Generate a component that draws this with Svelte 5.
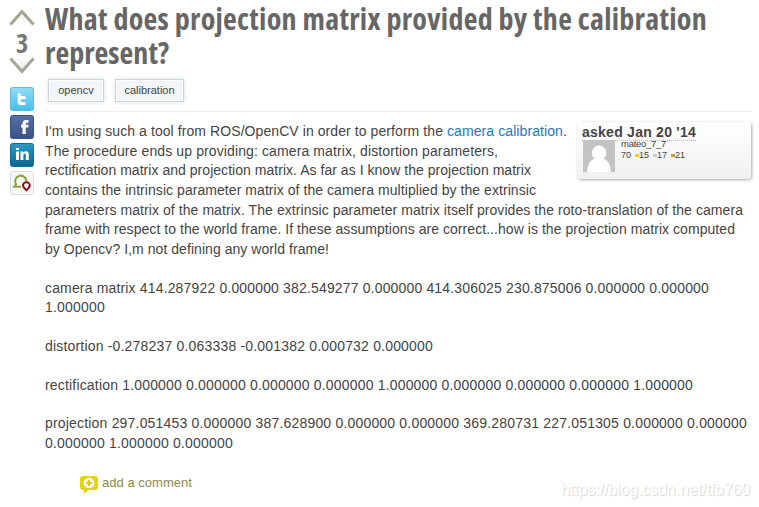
<script>
  const lines = [
    ["I'm using such a tool from ROS/OpenCV in order to perform the ", 402, 'camera calibration'],
    ['The procedure ends up providing: camera matrix, distortion parameters,', 453],
    ['rectification matrix and projection matrix. As far as I know the projection matrix', 486],
    ['contains the intrinsic parameter matrix of the camera multiplied by the extrinsic', 491],
    ['parameters matrix of the matrix. The extrinsic parameter matrix itself provides the roto-translation of the camera', 698],
    ['frame with respect to the world frame. If these assumptions are correct...how is the projection matrix computed', 690],
    ['by Opencv? I,m not defining any world frame!', 284],
    ['']
  ];
  const matrices = [
    ['camera matrix 414.287922 0.000000 382.549277 0.000000 414.306025 230.875006 0.000000 0.000000', 664],
    ['1.000000', 60],
    [''],
    ['distortion -0.278237 0.063338 -0.001382 0.000732 0.000000', 388],
    [''],
    ['rectification 1.000000 0.000000 0.000000 0.000000 1.000000 0.000000 0.000000 0.000000 1.000000', 648],
    [''],
    ['projection 297.051453 0.000000 387.628900 0.000000 0.000000 369.280731 227.051305 0.000000 0.000000', 702],
    ['0.000000 1.000000 0.000000', 188]
  ];

  // Tracks a run of text so that it fills the given width.
  function fit(node, width) {
    if (!width) return;
    const natural = node.getBoundingClientRect().width;
    node.style.letterSpacing = (width - natural) / node.textContent.length + 'px';
  }
</script>

<div class="page">
  <aside>
    <svg class="arrow" width="26" height="19" viewBox="0 0 26 19">
      <defs><linearGradient id="up" x1="0" y1="0" x2="0" y2="1"><stop offset="0" stop-color="#eee" /><stop offset="1" stop-color="#fff" /></linearGradient></defs>
      <path d="M13 4 24 17H2Z" fill="url(#up)" />
      <path d="M1.5 17.500 13 4.500 24.5 17.500" fill="none" stroke="#a4a595" stroke-width="3" />
    </svg>
    <div class="score">3</div>
    <svg class="arrow down" width="26" height="19" viewBox="0 0 26 19">
      <defs><linearGradient id="dn" x1="0" y1="0" x2="0" y2="1"><stop offset="0" stop-color="#fff" /><stop offset="1" stop-color="#e4e4e4" /></linearGradient></defs>
      <path d="M2 2H24L13 15Z" fill="url(#dn)" />
      <path d="M1.5 2.5 13 15.5 24.5 2.5" fill="none" stroke="#a4a595" stroke-width="3" />
    </svg>
    <div class="share">
      <svg width="24" height="24" viewBox="0 0 24 24">
        <defs><linearGradient id="tw" x1="0" y1="0" x2="0" y2="1"><stop offset="0" stop-color="#90dcf5" /><stop offset="1" stop-color="#46bfed" /></linearGradient></defs>
        <rect x=".5" y=".5" width="23" height="23" rx="2" fill="url(#tw)" stroke="#65b9dd" />
        <path d="M9.2 7.500v6.700q0 2.300 2.300 2.300h2.700M9.2 10.700h5" fill="none" stroke="#fff" stroke-width="3.200" stroke-linecap="round" />
      </svg>
      <svg width="24" height="24" viewBox="0 0 24 24">
        <defs><linearGradient id="fb" x1="0" y1="0" x2="0" y2="1"><stop offset="0" stop-color="#5870a7" /><stop offset="1" stop-color="#3a5288" /></linearGradient></defs>
        <rect x=".5" y=".5" width="23" height="23" rx="2" fill="url(#fb)" stroke="#39528a" />
        <path d="M12.5 19v-6.500H11V9.700h1.500V8.500Q12.500 5 16 5h2.500v2.800H17q-1.300 0-1.300 1.200v.7h2.800l-.3 2.800h-2.500V19Z" fill="#fff" />
      </svg>
      <svg width="24" height="24" viewBox="0 0 24 24">
        <defs><linearGradient id="li" x1="0" y1="0" x2="0" y2="1"><stop offset="0" stop-color="#2d9bc4" /><stop offset="1" stop-color="#096592" /></linearGradient></defs>
        <rect x=".5" y=".5" width="23" height="23" rx="2" fill="url(#li)" stroke="#116e99" />
        <path d="M6 5h3v2H6zM6 8.500h3V17H6zM10.500 8.500h2.800v1Q14.300 8.200 16 8.200q2.800 0 2.800 3.200V17h-3v-5q0-1.500-1.100-1.500-1.300 0-1.300 1.700V17h-2.900Z" fill="#fff" />
      </svg>
      <svg width="24" height="24" viewBox="0 0 24 24">
        <rect x=".5" y=".5" width="23" height="23" rx="2" fill="#f7f7f7" stroke="#ddd" />
        <path d="M11 15.700H4.300L6 13.300A5.600 5.600 0 1 1 16.300 10" fill="none" stroke="#87a53a" stroke-width="2.100" />
        <path d="M16.400 19.200Q13 16.400 13 14.600a3.400 3.400 0 0 1 6.800 0Q19.800 16.400 16.400 19.200Z" fill="#fff" stroke="#831316" stroke-width="2" />
      </svg>
    </div>
  </aside>

  <main>
    <h1><span use:fit={662}>What does projection matrix provided by the calibration</span><br /><span use:fit={124}>represent?</span></h1>
    <div class="tags"><span class="tag t1">opencv</span><span class="tag t2">calibration</span></div>
    <div class="body">
      <div class="card">
        <div class="asked"><span use:fit={114}>asked Jan 20 '14</span></div>
        <div class="user">
          <svg width="32" height="32" viewBox="0 0 32 32">
            <rect width="32" height="32" fill="#c3c3c3" />
            <ellipse cx="16" cy="13" rx="7.300" ry="7.500" fill="#fff" />
            <path d="M4 32Q5 20 12 18.500h8Q27 20 28 32Z" fill="#fff" />
          </svg>
          <div class="info">
            <div class="name"><span use:fit={45}>mateo_7_7</span></div>
            <div class="rep"><span>70</span><i class="gold"></i><span>15</span><i class="silver"></i><span>17</span><i class="bronze"></i><span>21</span></div>
          </div>
        </div>
      </div>
      {#each lines as [text, width, link]}
        <div class="line"><span use:fit={width}>{text}</span>{#if link}<a href="#calibration"><span use:fit={116}>{link}</span></a>.{/if}</div>
      {/each}
      {#each matrices as [text, width]}
        <div class="line row"><span use:fit={width}>{text}</span></div>
      {/each}
    </div>
    <footer>
      <div class="comment">
        <svg width="18" height="18" viewBox="0 0 18 18">
          <path d="M3 0h12q3 0 3 3v8q0 3-3 3H9l-5.500 4L4 14H3q-3 0-3-3V3q0-3 3-3Z" fill="#e6d311" />
          <circle cx="9" cy="7" r="5.300" fill="#fff" />
          <path d="M9 4v6M6 7h6" stroke="#e0cb10" stroke-width="2" />
        </svg>
        <span use:fit={90}>add a comment</span>
      </div>
      <div class="mark"><span use:fit={189}>https://blog.csdn.net/tfb760</span></div>
    </footer>
  </main>
</div>

<style>
  :global(body) { background: #fff; overflow: hidden; }
  .page { display: flex; width: 759px; height: 507px; overflow: hidden; font-family: "Liberation Sans", Arial, sans-serif; color: #444; }
  aside { width: 45px; flex: none; padding: 7px 0 0 9px; box-sizing: border-box; }
  svg { display: block; flex: none; }
  .score { width: 26px; height: 29px; text-align: center; font: bold 26px/35px "Open Sans", sans-serif; font-stretch: 75%; color: #777; }
  .down { margin-top: 1px; }
  .share { display: flex; flex-direction: column; gap: 4px; padding: 12px 0 0 1px; }
  main { width: 707px; flex: none; }
  h1 { margin: 0; padding-top: 2px; height: 70px; font: bold 30px/34px "Open Sans", sans-serif; font-stretch: 75%; color: #666; white-space: nowrap; }
  .tags { display: flex; gap: 11px; padding: 7px 0 8px 3px; height: 24px; border-bottom: 1px solid #eee; }
  .tag { box-sizing: border-box; height: 23px; border: 1px solid #c9d7d6; background: #f1f5f7; box-shadow: inset 0 0 0 1px #fff, 0 0 4px #ddd; font-size: 11px; line-height: 21px; text-align: center; }
  .t1 { width: 56px; }
  .t2 { width: 69px; }
  .body { position: relative; padding-top: 10px; font-size: 14px; line-height: 19.5px; }
  .line { height: 19.63px; white-space: nowrap; }
  .row { height: 19.32px; }
  a { color: #1b79bd; text-decoration: none; }
  .card { position: absolute; left: 532px; top: 10px; width: 174px; height: 57px; border-radius: 4px; background: linear-gradient(#fff, #f0f0f0); box-shadow: 1px 1px 3px #aaa; }
  .asked { padding-left: 5px; height: 18px; font-weight: bold; line-height: 20px; white-space: nowrap; }
  .asked span { display: inline-block; height: 19px; border-bottom: 1px dotted #bbb; box-sizing: border-box; }
  .user { display: flex; gap: 6px; padding-left: 6px; }
  .info { font-size: 9.5px; }
  .name { height: 9px; overflow: hidden; display: flex; align-items: flex-end; line-height: 11px; }
  .rep { display: flex; align-items: center; height: 13px; font-size: 9px; }
  i { width: 4px; height: 3px; margin: 0 0 0 4px; }
  .gold { background: #fc0; }
  .silver { background: #ccc; }
  .bronze { background: #c93; }
  footer { display: flex; justify-content: space-between; padding: 23px 2px 0 35px; }
  .comment { display: flex; gap: 4px; font-size: 13px; line-height: 14px; color: #8f8b4c; white-space: nowrap; }
  .mark { font-size: 16px; line-height: 28px; color: #fff; text-shadow: 1px 1px 1px #d4d4d4; white-space: nowrap; }
</style>
